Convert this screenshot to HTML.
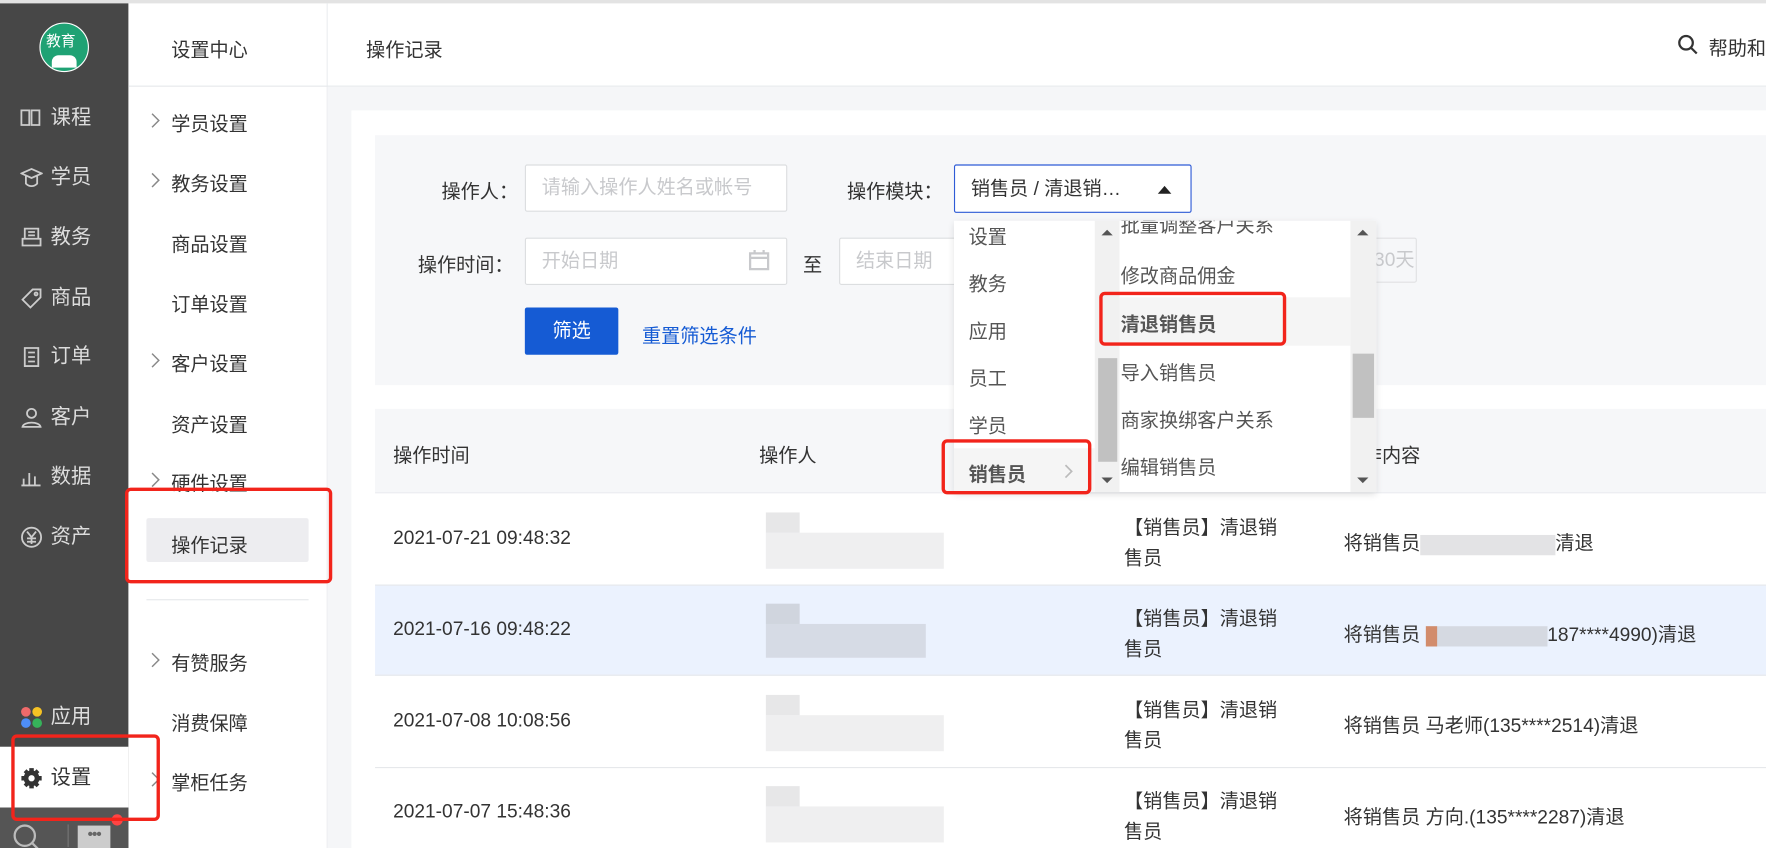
<!DOCTYPE html>
<html><head><meta charset="utf-8"><style>
*{box-sizing:border-box;margin:0;padding:0}
html,body{width:1766px;height:848px;overflow:hidden;background:#fff}
#w{position:absolute;left:0;top:0;width:1568px;height:753px;transform:scale(1.12628);transform-origin:0 0;font-family:"Liberation Sans","Noto Sans CJK SC",sans-serif;color:#333;font-size:17px;overflow:hidden}
.a{position:absolute;white-space:nowrap}
.side{position:absolute;left:0;top:3px;width:114px;height:750px;background:#474747}
.si{position:absolute;left:18px;width:90px;height:26px;color:#ddd;font-size:18px;line-height:24px;white-space:nowrap}
.si svg{position:absolute;left:0;top:3px}
.si span{position:absolute;left:27px;top:0}
.sub{position:absolute;left:152px;font-size:17px;color:#333;white-space:nowrap}
.chev{position:absolute;left:134px}
.inp{position:absolute;background:#fff;border:1px solid #dcdee0;border-radius:2px;color:#c8c9cc;padding-left:14px;line-height:40px;white-space:nowrap}
.red{position:absolute;border:3px solid #f2241b;border-radius:5px}
.dd{position:absolute;font-size:17px;color:#555;white-space:nowrap}
.blur{position:absolute;background:#e4e4e6;opacity:.9}
</style></head><body><div id="w">
<div class="a" style="left:0;top:0;width:1568px;height:3px;background:#e3e3e3"></div>
<div class="side"></div>
<div class="a" style="left:35px;top:20px;width:44px;height:44px;border-radius:50%;background:#1fa274;border:1px solid #fff"></div>
<div class="a" style="left:41px;top:26px;color:#fff;font-size:13px">教育</div>
<div class="a" style="left:46px;top:49px;width:22px;height:11px;background:#fff;border-radius:6px 6px 0 0"></div>
<div class="si" style="top:92px"><svg width="20" height="18" fill="none" stroke="#ccc" stroke-width="1.6"><path d="M1 3h7v13H1zM10 3h7v13h-7z"/></svg><span>课程</span></div>
<div class="si" style="top:145px"><svg width="20" height="20" fill="none" stroke="#ccc" stroke-width="1.6"><path d="M1 6l9-4 9 4-9 4zM5 8v7c3 3 7 3 10 0V8"/></svg><span>学员</span></div>
<div class="si" style="top:198px"><svg width="20" height="20" fill="none" stroke="#ccc" stroke-width="1.6"><path d="M4 2h12v9H4zM2 11h16v6H2zM7 5h6M7 8h6"/></svg><span>教务</span></div>
<div class="si" style="top:252px"><svg width="20" height="20" fill="none" stroke="#ccc" stroke-width="1.6"><path d="M11 2h7v7l-9 9-7-7z"/><circle cx="14" cy="6" r="1.3"/></svg><span>商品</span></div>
<div class="si" style="top:304px"><svg width="20" height="20" fill="none" stroke="#ccc" stroke-width="1.6"><path d="M4 2h12v16H4zM7 6h6M7 10h6M7 14h6"/></svg><span>订单</span></div>
<div class="si" style="top:358px"><svg width="20" height="20" fill="none" stroke="#ccc" stroke-width="1.6"><circle cx="10" cy="6" r="4"/><path d="M2 18c1-5 15-5 16 0z"/></svg><span>客户</span></div>
<div class="si" style="top:411px"><svg width="20" height="20" fill="none" stroke="#ccc" stroke-width="1.6"><path d="M3 17V11M8 17V6M13 17V9M18 17H1"/></svg><span>数据</span></div>
<div class="si" style="top:464px"><svg width="20" height="20" fill="none" stroke="#ccc" stroke-width="1.6"><circle cx="10" cy="10" r="8.5"/><path d="M6 5l4 5 4-5M10 10v6M6 11h8M6 14h8"/></svg><span>资产</span></div>
<div class="si" style="top:624px"><svg width="20" height="20"><circle cx="5" cy="5" r="4.3" fill="#f06a6a"/><circle cx="15" cy="5" r="4.3" fill="#f5c224"/><circle cx="5" cy="15" r="4.3" fill="#4e8ef7"/><circle cx="15" cy="15" r="4.3" fill="#36b25a"/></svg><span>应用</span></div>
<div class="a" style="left:0;top:663px;width:114px;height:54px;background:#fff"></div>
<div class="si" style="top:678px;color:#333"><svg width="20" height="20"><circle cx="10" cy="10" r="7" fill="#333"/><circle cx="10" cy="10" r="2.8" fill="#fff"/><path d="M8 1h4v4H8zM8 15h4v4H8zM1 8h4v4H1zM15 8h4v4h-4z" fill="#333"/><path d="M3 4.5l2.5-2.5 3 3-2.5 2.5zM14.5 2l2.5 2.5-3 3-2.5-2.5zM3 15.5l2.5 2.5 3-3-2.5-2.5zM17 15.5L14.5 18l-3-3 2.5-2.5z" fill="#333"/></svg><span>设置</span></div>
<div class="a" style="left:0;top:717px;width:114px;height:36px;background:#555"></div>
<svg class="a" style="left:10px;top:730px" width="30" height="30" fill="none" stroke="#bbb" stroke-width="2"><circle cx="12" cy="12" r="9"/><path d="M19 19l6 6"/></svg>
<div class="a" style="left:60px;top:732px;width:1px;height:20px;background:#777"></div>
<div class="a" style="left:69px;top:733px;width:29px;height:22px;background:#ccc;color:#666;font-size:14px;text-align:center;line-height:14px;letter-spacing:-1px">•••</div>
<div class="a" style="left:99px;top:723px;width:10px;height:10px;border-radius:50%;background:#f44"></div>
<div class="a" style="left:290px;top:3px;width:1px;height:750px;background:#ebedf0"></div>
<div class="a" style="left:114px;top:76px;width:1454px;height:1px;background:#e6e8eb"></div>
<div class="sub" style="top:30px">设置中心</div>
<svg class="chev" style="top:100px" width="8" height="14" fill="none" stroke="#888" stroke-width="1.3"><path d="M1 1l6 6-6 6"/></svg><div class="sub" style="top:96px">学员设置</div>
<svg class="chev" style="top:153px" width="8" height="14" fill="none" stroke="#888" stroke-width="1.3"><path d="M1 1l6 6-6 6"/></svg><div class="sub" style="top:149px">教务设置</div>
<div class="sub" style="top:203px">商品设置</div>
<div class="sub" style="top:256px">订单设置</div>
<svg class="chev" style="top:313px" width="8" height="14" fill="none" stroke="#888" stroke-width="1.3"><path d="M1 1l6 6-6 6"/></svg><div class="sub" style="top:309px">客户设置</div>
<div class="sub" style="top:363px">资产设置</div>
<svg class="chev" style="top:419px" width="8" height="14" fill="none" stroke="#888" stroke-width="1.3"><path d="M1 1l6 6-6 6"/></svg><div class="sub" style="top:415px">硬件设置</div>
<div class="a" style="left:130px;top:460px;width:144px;height:39px;background:#ededf0;border-radius:2px"></div>
<div class="sub" style="top:470px">操作记录</div>
<div class="a" style="left:130px;top:532px;width:144px;height:1px;background:#e6e8eb"></div>
<svg class="chev" style="top:579px" width="8" height="14" fill="none" stroke="#888" stroke-width="1.3"><path d="M1 1l6 6-6 6"/></svg><div class="sub" style="top:575px">有赞服务</div>
<div class="sub" style="top:628px">消费保障</div>
<svg class="chev" style="top:685px" width="8" height="14" fill="none" stroke="#888" stroke-width="1.3"><path d="M1 1l6 6-6 6"/></svg><div class="sub" style="top:681px">掌柜任务</div>
<div class="a" style="left:325px;top:30px">操作记录</div>
<svg class="a" style="left:1489px;top:30px" width="20" height="20" fill="none" stroke="#333" stroke-width="2"><circle cx="8" cy="8" r="6"/><path d="M12.5 12.5l5 5"/></svg>
<div class="a" style="left:1517px;top:29px;font-size:17px">帮助和</div>
<div class="a" style="left:291px;top:77px;width:1277px;height:676px;background:#f5f6f8"></div>
<div class="a" style="left:312px;top:98px;width:1256px;height:655px;background:#fff"></div>
<div class="a" style="left:333px;top:120px;width:1235px;height:222px;background:#f6f7f9"></div>
<div class="a" style="left:392px;top:156px">操作人：</div>
<div class="inp" style="left:466px;top:146px;width:233px;height:42px">请输入操作人姓名或帐号</div>
<div class="a" style="left:752px;top:156px">操作模块：</div>
<div class="a" style="left:847px;top:146px;width:211px;height:43px;border:1px solid #2e5bd6;border-radius:2px;background:#fff;padding-left:14px;line-height:41px">销售员 / 清退销…</div>
<div class="a" style="left:1028px;top:165px;border-left:6px solid transparent;border-right:6px solid transparent;border-bottom:7px solid #222"></div>
<div class="a" style="left:371px;top:221px">操作时间：</div>
<div class="inp" style="left:466px;top:211px;width:233px;height:42px">开始日期</div>
<svg class="a" style="left:664px;top:221px" width="20" height="20" fill="none" stroke="#c8c9cc" stroke-width="2"><path d="M2 4h16v14H2zM2 8h16M6 1v4M14 1v4"/></svg>
<div class="a" style="left:713px;top:221px">至</div>
<div class="inp" style="left:745px;top:211px;width:233px;height:42px">结束日期</div>
<div class="a" style="left:1190px;top:211px;width:68px;height:40px;border:1px solid #e0e1e3;border-radius:2px;color:#c8c9cc;line-height:38px;padding-left:12px">近30天</div>
<div class="a" style="left:466px;top:273px;width:83px;height:42px;background:#155bd4;border-radius:2px;color:#fff;text-align:center;line-height:42px">筛选</div>
<div class="a" style="left:570px;top:284px;color:#155bd4">重置筛选条件</div>
<div class="a" style="left:333px;top:363px;width:1235px;height:75px;background:#f6f7f9;border-bottom:1px solid #ebedf0"></div>
<div class="a" style="left:349px;top:390px">操作时间</div>
<div class="a" style="left:674px;top:390px">操作人</div>
<div class="a" style="left:1193px;top:390px">操作内容</div>
<div class="a" style="left:333px;top:519px;width:1235px;height:81px;background:#ebf2fe;border-top:1px solid #e6e8eb;border-bottom:1px solid #e6e8eb"></div>
<div class="a" style="left:333px;top:681px;width:1235px;height:1px;background:#e6e8eb"></div>
<div class="a" style="left:349px;top:468px">2021-07-21 09:48:32</div>
<div class="a" style="left:349px;top:549px">2021-07-16 09:48:22</div>
<div class="a" style="left:349px;top:630px">2021-07-08 10:08:56</div>
<div class="a" style="left:349px;top:711px">2021-07-07 15:48:36</div>
<div class="a" style="left:998px;top:455px;line-height:27px">【销售员】清退销<br>售员</div>
<div class="a" style="left:998px;top:536px;line-height:27px">【销售员】清退销<br>售员</div>
<div class="a" style="left:998px;top:617px;line-height:27px">【销售员】清退销<br>售员</div>
<div class="a" style="left:998px;top:698px;line-height:27px">【销售员】清退销<br>售员</div>
<div class="a" style="left:1193px;top:468px">将销售员<span style="display:inline-block;width:120px;height:18px;background:#e3e3e5;vertical-align:middle"></span>清退</div>
<div class="a" style="left:1193px;top:549px">将销售员 <span style="display:inline-block;width:108px;height:18px;background:#d5d9e1;vertical-align:middle;border-left:10px solid #d28c6c"></span>187****4990)清退</div>
<div class="a" style="left:1193px;top:630px">将销售员 马老师(135****2514)清退</div>
<div class="a" style="left:1193px;top:711px">将销售员 方向.(135****2287)清退</div>
<div class="blur" style="left:680px;top:455px;width:30px;height:18px"></div><div class="blur" style="left:680px;top:473px;width:158px;height:32px;opacity:.6"></div>
<div class="blur" style="left:680px;top:536px;width:30px;height:18px;background:#cdd1da"></div><div class="blur" style="left:680px;top:554px;width:142px;height:30px;background:#cdd1da;opacity:.7"></div>
<div class="blur" style="left:680px;top:617px;width:30px;height:18px"></div><div class="blur" style="left:680px;top:635px;width:158px;height:32px;opacity:.6"></div>
<div class="blur" style="left:680px;top:698px;width:30px;height:18px"></div><div class="blur" style="left:680px;top:716px;width:158px;height:32px;opacity:.6"></div>
<div class="a" style="left:847px;top:196px;width:375px;height:241px;background:#fff;box-shadow:0 2px 6px rgba(0,0,0,.12)"></div>
<div class="a" style="left:972px;top:196px;width:22px;height:241px;background:#f1f1f1"></div>
<div class="a" style="left:975px;top:318px;width:17px;height:92px;background:#c1c1c1"></div>
<div class="a" style="left:1199px;top:196px;width:23px;height:241px;background:#f1f1f1"></div>
<div class="a" style="left:1201px;top:314px;width:19px;height:57px;background:#c1c1c1"></div>
<div class="a" style="left:978px;top:204px;border-left:5px solid transparent;border-right:5px solid transparent;border-bottom:5px solid #555"></div>
<div class="a" style="left:978px;top:424px;border-left:5px solid transparent;border-right:5px solid transparent;border-top:5px solid #555"></div>
<div class="a" style="left:1205px;top:204px;border-left:5px solid transparent;border-right:5px solid transparent;border-bottom:5px solid #555"></div>
<div class="a" style="left:1205px;top:424px;border-left:5px solid transparent;border-right:5px solid transparent;border-top:5px solid #555"></div>
<div class="dd" style="left:860px;top:196px">设置</div>
<div class="dd" style="left:860px;top:238px">教务</div>
<div class="dd" style="left:860px;top:280px">应用</div>
<div class="dd" style="left:860px;top:322px">员工</div>
<div class="dd" style="left:860px;top:364px">学员</div>
<div class="a" style="left:847px;top:398px;width:125px;height:39px;background:#f5f5f5"></div>
<div class="dd" style="left:860px;top:407px;font-weight:bold">销售员</div>
<svg class="a" style="left:945px;top:412px" width="8" height="13" fill="none" stroke="#bbb" stroke-width="1.5"><path d="M1 1l5.5 5.5L1 12"/></svg>
<div class="a" style="left:994px;top:196px;width:205px;height:12px;overflow:hidden"><div class="dd" style="left:1px;top:-10px">批量调整客户关系</div></div>
<div class="dd" style="left:995px;top:231px">修改商品佣金</div>
<div class="a" style="left:994px;top:264px;width:205px;height:43px;background:#f5f5f5"></div>
<div class="dd" style="left:995px;top:274px;font-weight:bold">清退销售员</div>
<div class="dd" style="left:995px;top:317px">导入销售员</div>
<div class="dd" style="left:995px;top:359px">商家换绑客户关系</div>
<div class="dd" style="left:995px;top:401px">编辑销售员</div>
<div class="red" style="left:836px;top:390px;width:133px;height:49px"></div>
<div class="red" style="left:976px;top:259px;width:166px;height:48px"></div>
<div class="red" style="left:111px;top:433px;width:184px;height:85px"></div>
<div class="red" style="left:10px;top:652px;width:132px;height:77px"></div>
</div></body></html>
